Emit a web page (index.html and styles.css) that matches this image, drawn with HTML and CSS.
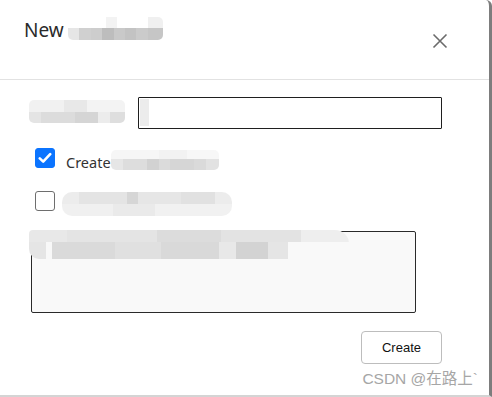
FILE: index.html
```html
<!DOCTYPE html>
<html>
<head>
<meta charset="utf-8">
<link rel="stylesheet" href="styles.css">
</head>
<body>
<div class="dialog">
  <div class="header">
    <div class="title">New<span class="mosaic mosaic-title"><span class="m-top"></span><span class="m-bot"></span></span></div>
    <button class="close" aria-label="Close">
      <svg width="16" height="16" viewBox="0 0 16 16"><path d="M1.5 1.5 L14.5 14.5 M14.5 1.5 L1.5 14.5" stroke="#6b6b6b" stroke-width="1.6" fill="none"/></svg>
    </button>
  </div>
  <div class="body">
    <div class="field-row">
      <span class="mosaic mosaic-label"><span class="m-top"></span><span class="m-bot"></span></span>
      <div class="input"><span class="input-ghost"></span></div>
    </div>
    <div class="check-row first">
      <span class="checkbox checked">
        <svg width="14" height="12" viewBox="0 0 14 12"><path d="M1.8 6.4 L5.2 9.6 L12.2 2.2" stroke="#fff" stroke-width="2.6" fill="none" stroke-linecap="round" stroke-linejoin="round"/></svg>
      </span>
      <span class="check-label">Create</span><span class="mosaic mosaic-check1"><span class="m-top"></span><span class="m-bot"></span></span>
    </div>
    <div class="check-row second">
      <span class="checkbox"></span>
      <span class="mosaic mosaic-check2"><span class="m-top"></span><span class="m-bot"></span></span>
    </div>
    <div class="textarea">
      <span class="mosaic mosaic-text"><span class="m-top"></span><span class="m-bot"></span></span>
    </div>
  </div>
  <div class="footer">
    <button class="btn">Create</button>
    <div class="watermark">CSDN @在路上`</div>
  </div>
</div>
</body>
</html>
```
FILE: styles.css
```css
html, body {
  margin: 0;
  padding: 0;
  background: #fff;
}
.dialog {
  width: 492px;
  height: 397px;
  box-sizing: border-box;
  border-right: 3px solid #7d7d7d;
  border-bottom: 2px solid #d4d4d4;
  border-top-right-radius: 6px;
  display: flex;
  flex-direction: column;
  font-family: "Noto Sans", "Liberation Sans", sans-serif;
  color: #222;
}
.header {
  height: 79px;
  border-bottom: 1px solid #e2e2e2;
  display: flex;
  align-items: flex-start;
  justify-content: space-between;
  padding: 0 40px 0 24px;
  flex: none;
}
.title {
  font-size: 19px;
  line-height: 24px;
  margin-top: 18px;
  color: #2a2a2a;
  display: flex;
  align-items: flex-start;
}
.close {
  margin-top: 32px;
  width: 18px;
  height: 18px;
  padding: 1px;
  border: 0;
  background: none;
  display: flex;
  align-items: center;
  justify-content: center;
}
/* blurred / pixelated text placeholders */
.mosaic {
  display: inline-flex;
  flex-direction: column;
  border-radius: 5px;
  overflow: hidden;
  filter: blur(0.4px);
}
.mosaic .m-top, .mosaic .m-bot {
  display: block;
  flex: 1;
}
.mosaic-title {
  width: 95px;
  height: 23px;
  margin-left: 4px;
  margin-top: -1px;
}
.mosaic-title .m-top {
  background: linear-gradient(to right, #fff 0 40%, #f3f3f3 40% 52%, #fff 52% 84%, #f0f0f0 84% 100%);
  flex: 0 0 11px;
}
.mosaic-title .m-bot {
  background: linear-gradient(to right, #e6e6e6 0 12%, #d0d0d0 12% 24%, #cdcdcd 24% 36%, #bdbdbd 36% 48%, #c9c9c9 48% 60%, #c3c3c3 60% 72%, #cbcbcb 72% 84%, #c6c6c6 84% 100%);
}
.body {
  padding: 17px 0 0 0;
  flex: 1;
  display: flex;
  flex-direction: column;
}
.field-row {
  display: flex;
  align-items: center;
  padding-left: 29px;
}
.mosaic-label {
  width: 96px;
  height: 23px;
  margin-right: 13px;
  margin-top: -3px;
}
.mosaic-label .m-top {
  background: linear-gradient(to right, #f1f1f1 0 36%, #e8e8e8 36% 60%, #f3f3f3 60% 100%);
}
.mosaic-label .m-bot {
  background: linear-gradient(to right, #e4e4e4 0 12%, #dcdcdc 12% 48%, #d5d5d5 48% 72%, #ececec 72% 84%, #dedede 84% 100%);
}
.input {
  width: 304px;
  height: 32px;
  box-sizing: border-box;
  border: 1px solid #1f1f1f;
  border-radius: 1px;
  background: #fff;
  overflow: hidden;
}
.input-ghost {
  display: block;
  margin-top: 1px;
  margin-left: 1px;
  width: 9px;
  height: 27px;
  background: #ececec;
}
.check-row {
  display: flex;
  align-items: center;
  padding-left: 35px;
  height: 20px;
}
.check-row.first { margin-top: 19px; }
.check-row.second { margin-top: 23px; }
.checkbox {
  width: 20px;
  height: 20px;
  box-sizing: border-box;
  border: 1.5px solid #6e6e6e;
  border-radius: 3px;
  background: #fff;
  display: flex;
  align-items: center;
  justify-content: center;
  flex: none;
}
.checkbox.checked {
  background: #0b74ff;
  border-color: #0b74ff;
}
.check-label {
  margin-left: 11px;
  font-size: 14.5px;
  color: #333;
  line-height: 20px;
  margin-top: 7px;
}
.mosaic-check1 {
  width: 108px;
  height: 20px;
  margin-top: 3px;
}
.mosaic-check1 .m-top {
  background: linear-gradient(to right, #f6f6f6 0 44%, #f2f2f2 44% 70%, #f7f7f7 70% 100%);
  flex: 0 0 9px;
}
.mosaic-check1 .m-bot {
  background: linear-gradient(to right, #e6e6e6 0 11%, #dddddd 11% 33%, #d2d2d2 33% 44%, #dbdbdb 44% 55%, #d6d6d6 55% 77%, #dadada 77% 88%, #e2e2e2 88% 100%);
}
.mosaic-check2 {
  width: 170px;
  height: 24px;
  margin-left: 7px;
  margin-top: 6px;
  border-radius: 10px;
}
.mosaic-check2 .m-top {
  background: linear-gradient(to right, #ececec 0 10%, #e4e4e4 10% 38%, #d6d6d6 38% 45%, #e6e6e6 45% 70%, #e1e1e1 70% 90%, #ececec 90% 100%);
}
.mosaic-check2 .m-bot {
  background: linear-gradient(to right, #f0f0f0 0 30%, #eaeaea 30% 55%, #f1f1f1 55% 100%);
}
.textarea {
  margin-top: 20px;
  margin-left: 31px;
  width: 385px;
  height: 82px;
  box-sizing: border-box;
  border: 1px solid #2a2a2a;
  border-radius: 2px;
  background: #f9f9f9;
  display: flex;
  align-items: flex-start;
}
.mosaic-text {
  width: 320px;
  height: 29px;
  margin-left: -3px;
  margin-top: -2px;
  border-radius: 4px 14px 14px 10px;
}
.mosaic-text .m-top {
  background: linear-gradient(to right, #e8e8e8 0 12%, #e4e4e4 12% 40%, #dcdcdc 40% 60%, #e3e3e3 60% 85%, #eeeeee 85% 100%);
  flex: 0 0 12px;
}
.mosaic-text .m-bot {
  background: linear-gradient(to right, #e5e5e5 0 6%, #f8f8f8 6% 8%, #dadada 8% 30%, #e0e0e0 30% 46%, #d9d9d9 46% 66%, #e8e8e8 66% 72%, #d3d3d3 72% 83%, #e5e5e5 83% 90%, #f9f9f9 90% 100%);
  margin-right: 10%;
}
.footer {
  flex: none;
  display: flex;
  flex-direction: column;
  align-items: flex-end;
  padding: 0 11px 7px 0;
}
.btn {
  width: 81px;
  height: 33px;
  margin-right: 36px;
  border: 1px solid #bdbdbd;
  border-radius: 4px;
  background: #fff;
  font-family: "Liberation Sans", Arial, sans-serif;
  font-size: 13px;
  color: #111;
  padding: 0;
}
.watermark {
  margin-top: 5px;
  font-family: "Liberation Sans", "Noto Sans CJK SC", sans-serif;
  font-size: 15.5px;
  line-height: 19px;
  color: #a6a6a6;
}
```
